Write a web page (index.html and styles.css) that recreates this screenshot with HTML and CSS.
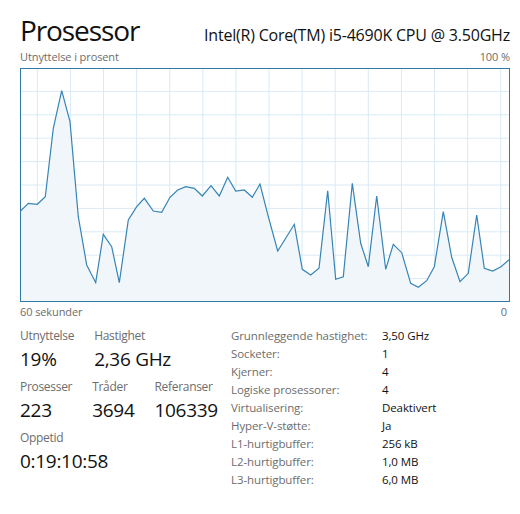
FILE: index.html
```html
<!DOCTYPE html>
<html lang="no">
<head>
<meta charset="utf-8">
<title>Prosessor</title>
<link rel="stylesheet" href="styles.css">
</head>
<body>
<div class="page">
  <div class="header">
    <div class="title">Prosessor</div>
    <div class="cpu-name">Intel(R) Core(TM) i5-4690K CPU @ 3.50GHz</div>
  </div>
  <div class="axis-row top">
    <span>Utnyttelse i prosent</span>
    <span>100 %</span>
  </div>
  <div class="chart">
    <svg class="chart-svg" viewBox="0 0 490 234" width="490" height="234" preserveAspectRatio="none">
      <g class="grid">
        <line x1="17.3" y1="0" x2="17.3" y2="234"/>
        <line x1="50.4" y1="0" x2="50.4" y2="234"/>
        <line x1="83.5" y1="0" x2="83.5" y2="234"/>
        <line x1="116.6" y1="0" x2="116.6" y2="234"/>
        <line x1="149.7" y1="0" x2="149.7" y2="234"/>
        <line x1="182.8" y1="0" x2="182.8" y2="234"/>
        <line x1="215.9" y1="0" x2="215.9" y2="234"/>
        <line x1="249" y1="0" x2="249" y2="234"/>
        <line x1="282.1" y1="0" x2="282.1" y2="234"/>
        <line x1="315.2" y1="0" x2="315.2" y2="234"/>
        <line x1="348.3" y1="0" x2="348.3" y2="234"/>
        <line x1="381.4" y1="0" x2="381.4" y2="234"/>
        <line x1="414.5" y1="0" x2="414.5" y2="234"/>
        <line x1="447.6" y1="0" x2="447.6" y2="234"/>
        <line x1="480.7" y1="0" x2="480.7" y2="234"/>
        <line x1="0" y1="23.4" x2="490" y2="23.4"/>
        <line x1="0" y1="46.8" x2="490" y2="46.8"/>
        <line x1="0" y1="70.2" x2="490" y2="70.2"/>
        <line x1="0" y1="93.6" x2="490" y2="93.6"/>
        <line x1="0" y1="117" x2="490" y2="117"/>
        <line x1="0" y1="140.4" x2="490" y2="140.4"/>
        <line x1="0" y1="163.8" x2="490" y2="163.8"/>
        <line x1="0" y1="187.2" x2="490" y2="187.2"/>
        <line x1="0" y1="210.6" x2="490" y2="210.6"/>
      </g>
      <polygon class="area" points="0,143.7 8.3,135.3 17.3,136.3 25.3,128.7 33.3,60.3 41.7,22.7 50,53.7 58.3,148.7 66.7,197 75.7,214.7 83.3,166.3 91.7,178.7 99.3,214.7 108.3,152 116.7,138.7 124.3,130.3 133.3,143 141.7,144.3 150,129.3 157.7,122 165.7,118.7 174.3,120.3 182.3,128 191,117.7 199.3,128 207.7,109.3 215.7,123 224.3,122 232.3,129.3 240,116 248.3,148.7 257.7,183 266,169.7 274.3,156.3 282.3,201.3 290.7,207 299,200.3 307.7,122.7 315.7,211.3 323.3,208.7 332.3,115.3 340.7,175.3 348.3,198.7 356.7,128 365.7,201.3 373.3,176.3 381.7,184.7 390.7,215.3 398.3,219.3 406.7,212.7 414.3,198.7 423.3,143.7 431.7,189.3 440,213.7 448.3,205.3 456.7,147 464.3,200.3 472.7,203 481,198.7 490,191 490,234 0,234"/>
      <polyline class="line" points="0,143.7 8.3,135.3 17.3,136.3 25.3,128.7 33.3,60.3 41.7,22.7 50,53.7 58.3,148.7 66.7,197 75.7,214.7 83.3,166.3 91.7,178.7 99.3,214.7 108.3,152 116.7,138.7 124.3,130.3 133.3,143 141.7,144.3 150,129.3 157.7,122 165.7,118.7 174.3,120.3 182.3,128 191,117.7 199.3,128 207.7,109.3 215.7,123 224.3,122 232.3,129.3 240,116 248.3,148.7 257.7,183 266,169.7 274.3,156.3 282.3,201.3 290.7,207 299,200.3 307.7,122.7 315.7,211.3 323.3,208.7 332.3,115.3 340.7,175.3 348.3,198.7 356.7,128 365.7,201.3 373.3,176.3 381.7,184.7 390.7,215.3 398.3,219.3 406.7,212.7 414.3,198.7 423.3,143.7 431.7,189.3 440,213.7 448.3,205.3 456.7,147 464.3,200.3 472.7,203 481,198.7 490,191"/>
      <rect class="frame" x="0.5" y="0.5" width="489" height="233"/>
    </svg>
  </div>
  <div class="axis-row bottom">
    <span>60 sekunder</span>
    <span class="zero">0</span>
  </div>
  <div class="stats">
    <div class="dynamic">
      <div class="stat-row">
        <div class="stat"><div class="label">Utnyttelse</div><div class="value">19%</div></div>
        <div class="stat"><div class="label">Hastighet</div><div class="value">2,36 GHz</div></div>
      </div>
      <div class="stat-row">
        <div class="stat"><div class="label">Prosesser</div><div class="value">223</div></div>
        <div class="stat"><div class="label">Tråder</div><div class="value">3694</div></div>
        <div class="stat"><div class="label">Referanser</div><div class="value">106339</div></div>
      </div>
      <div class="stat-row">
        <div class="stat"><div class="label">Oppetid</div><div class="value">0:19:10:58</div></div>
      </div>
    </div>
    <div class="static">
      <div class="k">Grunnleggende hastighet:</div><div class="v">3,50 GHz</div>
      <div class="k">Socketer:</div><div class="v">1</div>
      <div class="k">Kjerner:</div><div class="v">4</div>
      <div class="k">Logiske prosessorer:</div><div class="v">4</div>
      <div class="k">Virtualisering:</div><div class="v">Deaktivert</div>
      <div class="k">Hyper-V-støtte:</div><div class="v">Ja</div>
      <div class="k">L1-hurtigbuffer:</div><div class="v">256 kB</div>
      <div class="k">L2-hurtigbuffer:</div><div class="v">1,0 MB</div>
      <div class="k">L3-hurtigbuffer:</div><div class="v">6,0 MB</div>
    </div>
  </div>
</div>
</body>
</html>
```

FILE: styles.css
```css
html, body {
  margin: 0;
  padding: 0;
  background: #ffffff;
}

body {
  font-family: "Open Sans", "Noto Sans", "Liberation Sans", sans-serif;
  color: #000000;
}

.page {
  width: 490px;
  padding: 13px 10px 0 20px;
}

.header {
  display: flex;
  align-items: baseline;
  justify-content: space-between;
  height: 36px;
}

.title {
  font-size: 28px;
  line-height: 34px;
  letter-spacing: -1.1px;
  color: #111111;
}

.cpu-name {
  font-size: 16px;
  line-height: 20px;
  letter-spacing: -0.2px;
  color: #111111;
}

.axis-row {
  display: flex;
  justify-content: space-between;
  font-size: 11px;
  color: #6d6d6d;
  line-height: 15px;
  letter-spacing: -0.1px;
}

.axis-row.top {
  height: 19px;
}

.axis-row.bottom {
  height: 18px;
  padding-top: 2px;
}

.zero {
  padding-right: 3px;
}

.chart {
  width: 490px;
  height: 234px;
}

.chart-svg {
  display: block;
}

.grid line {
  stroke: #d9eaf4;
  stroke-width: 1;
}

.area {
  fill: #f1f6fa;
}

.line {
  fill: none;
  stroke: #3684b6;
  stroke-width: 1.2;
  stroke-linejoin: miter;
}

.frame {
  fill: none;
  stroke: #2f7aa6;
  stroke-width: 1;
}

.stats {
  display: flex;
  padding-top: 5px;
}

.dynamic {
  width: 211px;
  display: flex;
  flex-direction: column;
  gap: 4px;
}

.stat-row {
  display: flex;
  gap: 20px;
}

.label {
  font-size: 12px;
  line-height: 18px;
  color: #6d6d6d;
  letter-spacing: -0.3px;
}

.value {
  font-size: 19px;
  line-height: 29px;
  letter-spacing: -0.3px;
  color: #111111;
}

.static {
  display: grid;
  grid-template-columns: 151px auto;
  grid-auto-rows: 18px;
  font-size: 11.5px;
  line-height: 18px;
  letter-spacing: -0.1px;
}

.k {
  color: #6d6d6d;
}

.v {
  color: #111111;
}
```
